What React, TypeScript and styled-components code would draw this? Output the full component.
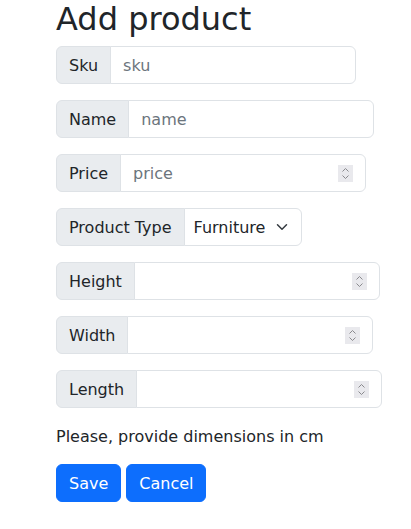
import React from "react";
import styled, { createGlobalStyle } from "styled-components";

const Global = createGlobalStyle`
  * { box-sizing: border-box; }
  body {
    margin: 0;
    font-family: "DejaVu Sans", "Liberation Sans", sans-serif;
    font-size: 16px;
    line-height: 1.5;
    color: #212529;
    background: #fff;
  }
`;

const Page = styled.div`
  padding: 0 0 0 56px;
`;

const Title = styled.h1`
  margin: 0 0 8px;
  font-size: 32px;
  font-weight: 500;
  line-height: 1.2;
`;

const Form = styled.form`
  display: flex;
  flex-direction: column;
  align-items: flex-start;
`;

const Group = styled.div`
  display: flex;
  align-items: stretch;
  margin-bottom: 16px;
`;

const Label = styled.span`
  display: flex;
  align-items: center;
  padding: 7px 12px 5px;
  font-size: 16px;
  line-height: 1.5;
  color: #212529;
  background: #e9ecef;
  border: 1px solid #dee2e6;
  border-radius: 6px 0 0 6px;
  white-space: nowrap;
`;

const InputWrap = styled.div`
  position: relative;
  margin-left: -1px;
  display: flex;
`;

const Input = styled.input`
  width: 246px;
  height: 38px;
  padding: 6px 12px;
  font-family: inherit;
  font-size: 16px;
  line-height: 1.5;
  color: #212529;
  background: #fff;
  border: 1px solid #dee2e6;
  border-radius: 0 6px 6px 0;
  outline: none;
  -moz-appearance: textfield;
  &::placeholder { color: #6c757d; opacity: 1; }
  &::-webkit-inner-spin-button,
  &::-webkit-outer-spin-button { -webkit-appearance: none; margin: 0; }
`;

const Spinner = styled.svg`
  position: absolute;
  right: 13px;
  top: 11px;
  width: 15px;
  height: 17px;
  background: #e9e9ed;
  pointer-events: none;
`;

const Select = styled.select`
  width: 118px;
  height: 38px;
  padding: 7px 36px 5px 9px;
  font-family: inherit;
  font-size: 16px;
  line-height: 1.5;
  color: #212529;
  background: #fff;
  border: 1px solid #dee2e6;
  border-radius: 0 6px 6px 0;
  appearance: none;
  outline: none;
`;

const Chevron = styled.svg`
  position: absolute;
  right: 12px;
  top: 13px;
  width: 16px;
  height: 12px;
  pointer-events: none;
`;

const Hint = styled.p`
  margin: 1px 0 15px;
`;

const Buttons = styled.div`
  display: flex;
  gap: 5px;
`;

const Button = styled.button`
  height: 38px;
  padding: 7px 12px 5px;
  font-family: inherit;
  font-size: 16px;
  line-height: 1.5;
  color: #fff;
  background: #0d6efd;
  border: 1px solid #0d6efd;
  border-radius: 6px;
`;

const Field = ({ label, type = "text", placeholder }: { label: string; type?: string; placeholder?: string }) => (
  <Group>
    <Label>{label}</Label>
    <InputWrap>
      <Input type={type} placeholder={placeholder} />
      {type === "number" && (
        <Spinner viewBox="0 0 15 17">
          <path d="M4.5 6.5 7.5 3.5 10.5 6.5M4.5 10.5 7.5 13.5 10.5 10.5" fill="none" stroke="#8a8a8e" strokeWidth="1" />
        </Spinner>
      )}
    </InputWrap>
  </Group>
);

export default function App() {
  return (
    <Page>
      <Global />
      <Title>Add product</Title>
      <Form onSubmit={(e) => e.preventDefault()}>
        <Field label="Sku" placeholder="sku" />
        <Field label="Name" placeholder="name" />
        <Field label="Price" type="number" placeholder="price" />
        <Group>
          <Label>Product Type</Label>
          <InputWrap>
            <Select defaultValue="Furniture">
              <option>DVD</option>
              <option>Furniture</option>
              <option>Book</option>
            </Select>
            <Chevron viewBox="0 0 16 16">
              <path fill="none" stroke="#343a40" strokeLinecap="round" strokeLinejoin="round" strokeWidth="2" d="m2 5 6 6 6-6" />
            </Chevron>
          </InputWrap>
        </Group>
        <Field label="Height" type="number" />
        <Field label="Width" type="number" />
        <Field label="Length" type="number" />
        <Hint>Please, provide dimensions in cm</Hint>
        <Buttons>
          <Button type="submit">Save</Button>
          <Button type="button">Cancel</Button>
        </Buttons>
      </Form>
    </Page>
  );
}
